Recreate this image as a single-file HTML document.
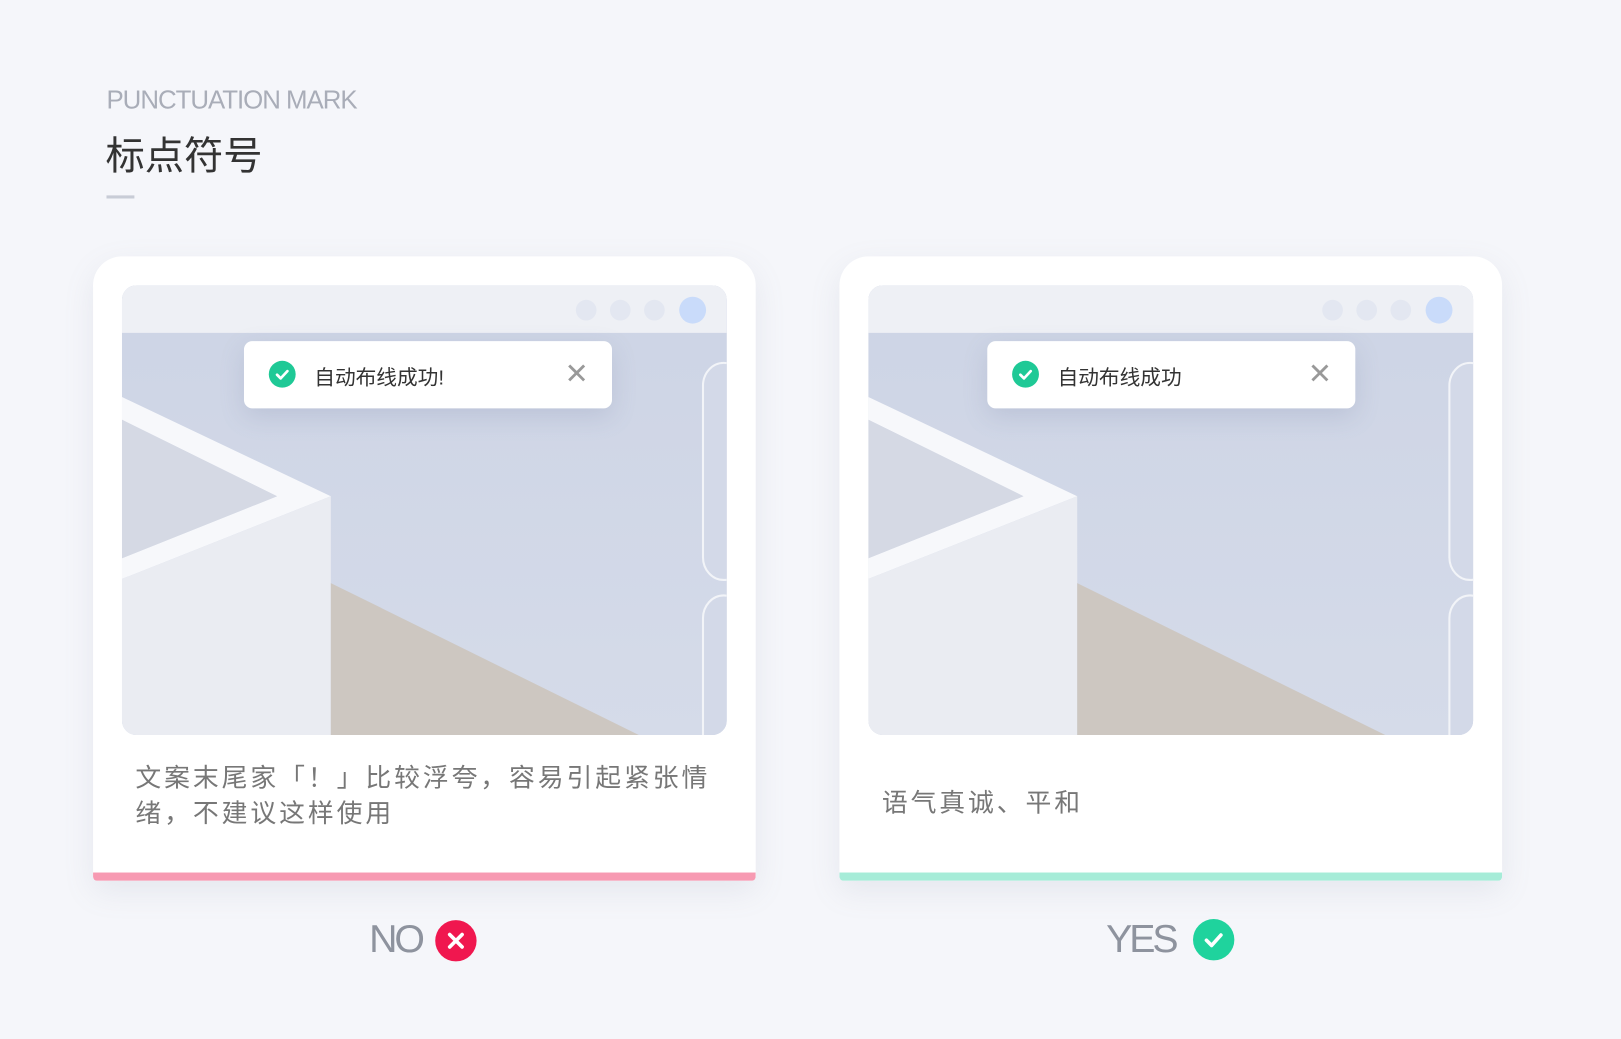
<!DOCTYPE html>
<html><head><meta charset="utf-8"><style>
html,body{margin:0;padding:0;background:#f5f6fa;width:1621px;height:1039px;overflow:hidden}
#w{width:1568px;height:1005px;transform:scale(1.0338);transform-origin:0 0;position:relative;font-family:"Liberation Sans","Noto Sans CJK SC",sans-serif}
.en{position:absolute;left:103px;top:83px;font-size:25px;color:#a9adb8;letter-spacing:-1px}
.zh{position:absolute;left:102px;top:120px;font-size:38px;color:#333}
.ln{position:absolute;left:103px;top:189px;width:27px;height:3px;background:#c8ccd6}
.card{position:absolute;top:248px;width:641px;height:604px;background:#fff;border-radius:28px 28px 4px 4px;box-shadow:0 10px 30px rgba(120,130,160,.12);overflow:hidden}
.bar{position:absolute;left:0;bottom:0;width:100%;height:8px}
.scr{position:absolute;left:28px;top:28px;width:585px;height:435px;border-radius:14px;overflow:hidden;background:#d3d9e8}
.toast{position:absolute;left:118px;top:54px;width:356px;height:65px;background:#fff;border-radius:8px;box-shadow:0 8px 24px rgba(100,110,150,.18)}
.chk{position:absolute;left:24px;top:19px;width:26px;height:26px;border-radius:50%;background:#1fc996}
.tt{position:absolute;left:68px;top:19px;font-size:20px;color:#333}
.x{position:absolute;left:310px;top:18px;font-size:28px;color:#999;line-height:28px}
.desc{position:absolute;font-size:25px;color:#777;line-height:34px;letter-spacing:2.8px;white-space:nowrap}
.lab{position:absolute;font-size:38px;color:#8e939e;top:888px;letter-spacing:-3px}
.ic{position:absolute;width:40px;height:40px;border-radius:50%}
</style></head><body><div id="w">
<div class="en">PUNCTUATION MARK</div>
<div class="zh">标点符号</div>
<div class="ln"></div>

<svg width="0" height="0" style="position:absolute"><defs><linearGradient id="g" x1="0" y1="0" x2="0" y2="1"><stop offset="0" stop-color="#cdd4e5"/><stop offset="1" stop-color="#d5dbe9"/></linearGradient></defs></svg>

<div class="card" style="left:90px">
 <div class="scr">
  <svg width="585" height="435" style="position:absolute;left:0;top:0">
   <rect width="585" height="435" fill="url(#g)"/>
   <rect width="585" height="46" fill="#eef0f5"/>
   <circle cx="449" cy="24" r="10" fill="#e3e7f1"/><circle cx="482" cy="24" r="10" fill="#e3e7f1"/><circle cx="515" cy="24" r="10" fill="#e3e7f1"/><circle cx="552" cy="24" r="13" fill="#c9dbfa"/>
   <polygon points="0,108 202,204 0,284 0,264 150,204 0,130" fill="#f7f8fb"/>
   <polygon points="0,130 150,204 0,264" fill="#d5d9e4"/>
   <polygon points="0,284 202,204 202,435 0,435" fill="#eaecf2"/>
   <polygon points="202,288 500,435 202,435" fill="#cdc7c1"/>
   <rect x="562" y="75" width="40" height="210" rx="22" fill="#d3d9e8" stroke="#f2f4f8" stroke-width="2"/>
   <rect x="562" y="300" width="40" height="200" rx="22" fill="#d3d9e8" stroke="#f2f4f8" stroke-width="2"/>
  </svg>
  <div class="toast"><div class="chk"><svg width="26" height="26"><path d="M8 13.5l3.5 3.5 6.5-7" fill="none" stroke="#fff" stroke-width="2.6" stroke-linecap="round" stroke-linejoin="round"/></svg></div><div class="tt">自动布线成功!</div><div class="x">✕</div></div>
 </div>
 <div class="desc" style="left:41px;top:488px">文案末尾家「！」比较浮夸，容易引起紧张情<br>绪，不建议这样使用</div>
 <div class="bar" style="background:#f79ab2"></div>
</div>

<div class="card" style="left:812px">
 <div class="scr">
  <svg width="585" height="435" style="position:absolute;left:0;top:0">
   <rect width="585" height="435" fill="url(#g)"/>
   <rect width="585" height="46" fill="#eef0f5"/>
   <circle cx="449" cy="24" r="10" fill="#e3e7f1"/><circle cx="482" cy="24" r="10" fill="#e3e7f1"/><circle cx="515" cy="24" r="10" fill="#e3e7f1"/><circle cx="552" cy="24" r="13" fill="#c9dbfa"/>
   <polygon points="0,108 202,204 0,284 0,264 150,204 0,130" fill="#f7f8fb"/>
   <polygon points="0,130 150,204 0,264" fill="#d5d9e4"/>
   <polygon points="0,284 202,204 202,435 0,435" fill="#eaecf2"/>
   <polygon points="202,288 500,435 202,435" fill="#cdc7c1"/>
   <rect x="562" y="75" width="40" height="210" rx="22" fill="#d3d9e8" stroke="#f2f4f8" stroke-width="2"/>
   <rect x="562" y="300" width="40" height="200" rx="22" fill="#d3d9e8" stroke="#f2f4f8" stroke-width="2"/>
  </svg>
  <div class="toast" style="left:115px"><div class="chk"><svg width="26" height="26"><path d="M8 13.5l3.5 3.5 6.5-7" fill="none" stroke="#fff" stroke-width="2.6" stroke-linecap="round" stroke-linejoin="round"/></svg></div><div class="tt">自动布线成功</div><div class="x">✕</div></div>
 </div>
 <div class="desc" style="left:41px;top:512px">语气真诚、平和</div>
 <div class="bar" style="background:#a6ecd8"></div>
</div>

<div class="lab" style="left:357px">NO</div>
<div class="ic" style="left:421px;top:890px;background:#f0174f"><svg width="40" height="40"><path d="M14 14l12 12M26 14l-12 12" stroke="#fff" stroke-width="3.5" stroke-linecap="round"/></svg></div>
<div class="lab" style="left:1070px">YES</div>
<div class="ic" style="left:1154px;top:889px;background:#1fd39d"><svg width="40" height="40"><path d="M13 20.5l5 5 9-10" fill="none" stroke="#fff" stroke-width="3.5" stroke-linecap="round" stroke-linejoin="round"/></svg></div>
</div></body></html>
